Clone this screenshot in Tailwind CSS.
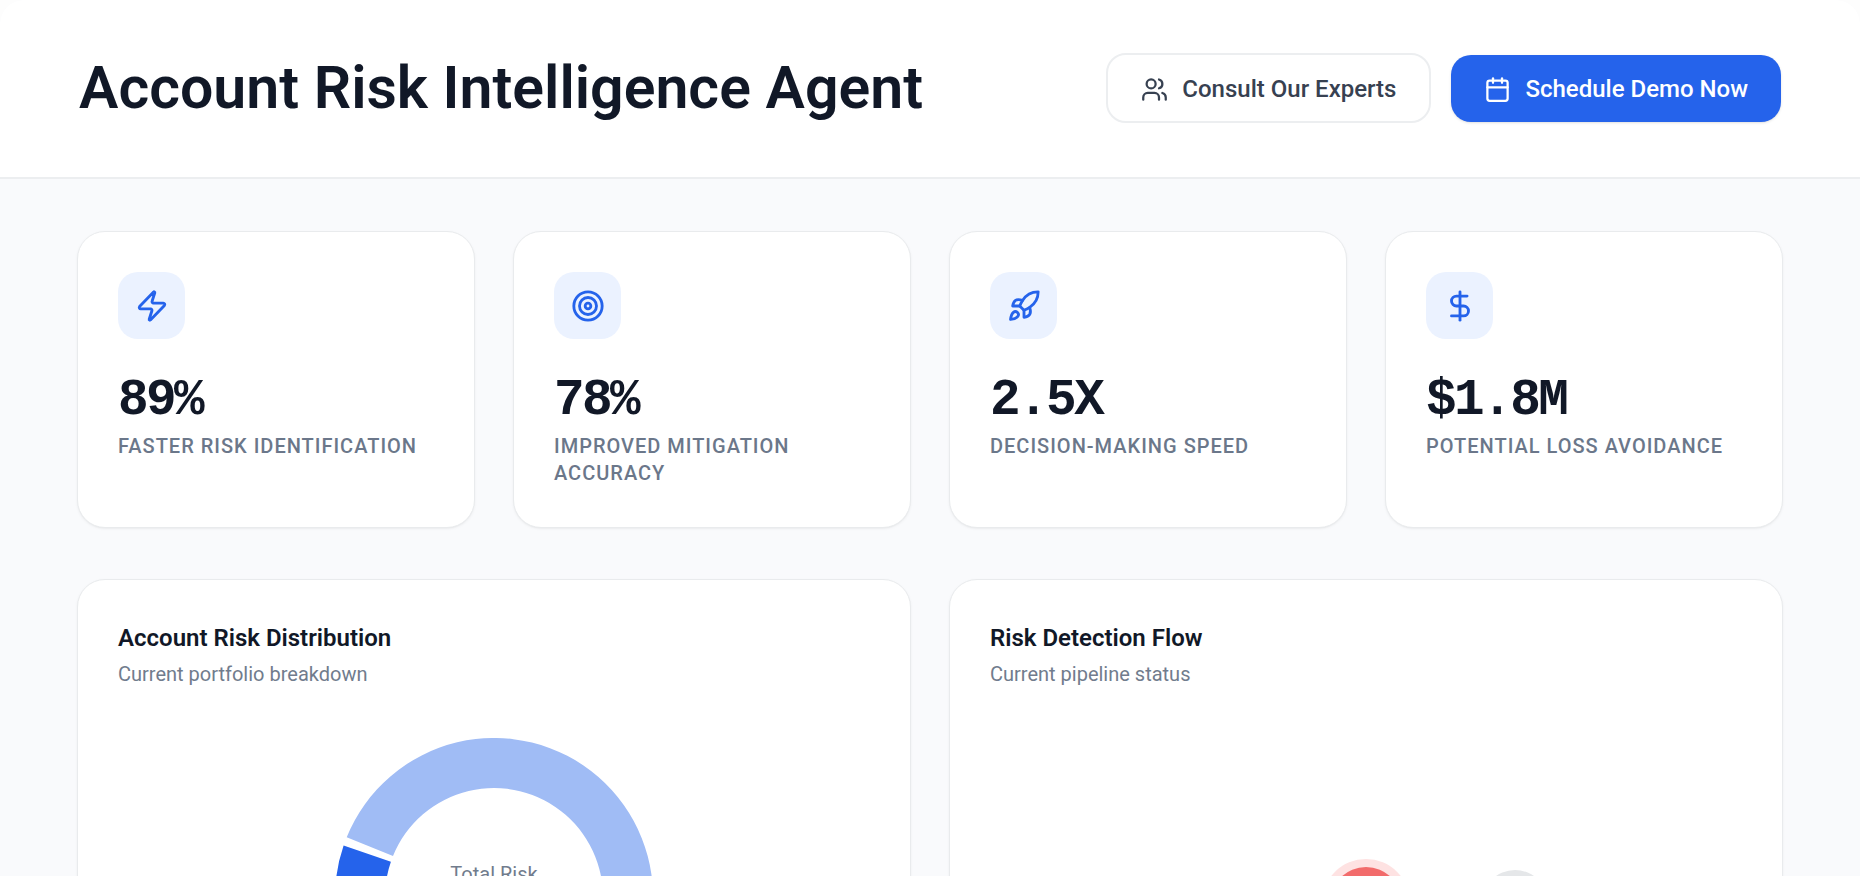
<!DOCTYPE html>
<html lang="en">
<head>
  <meta charset="UTF-8">
  <title>Account Risk Intelligence Agent</title>
  <meta name="viewport" content="width=device-width, initial-scale=1.0">
  <script src="https://cdn.jsdelivr.net/npm/@tailwindcss/browser@4"></script>
</head>
<body class="h-screen overflow-hidden bg-[#fdfdfd] font-['Roboto','Liberation_Sans',sans-serif] text-[#111827]">
  <div id="page" class="min-h-full rounded-t-3xl bg-[#f9fafc] overflow-hidden">
    <header class="flex items-center justify-between gap-8 bg-white border-b-2 border-[#eceef0] px-[79px] pt-[53px] pb-[54px]">
      <h1 class="text-[59px] leading-[70px] font-semibold whitespace-nowrap">Account Risk Intelligence Agent</h1>
      <div class="flex items-center gap-5 text-2xl font-medium whitespace-nowrap">
        <button type="button" class="flex items-center gap-3.5 h-[70px] px-[33px] pt-0.5 rounded-[20px] border-2 border-[#eceef0] bg-white text-[#374151]">
          <svg class="size-[27px]" viewBox="0 0 24 24" fill="none" stroke="currentColor" stroke-width="2" stroke-linecap="round" stroke-linejoin="round" aria-hidden="true">
            <path d="M16 21v-2a4 4 0 0 0-4-4H6a4 4 0 0 0-4 4v2"/>
            <circle cx="9" cy="7" r="4"/>
            <path d="M22 21v-2a4 4 0 0 0-3-3.87"/>
            <path d="M16 3.13a4 4 0 0 1 0 7.75"/>
          </svg>
          Consult Our Experts
        </button>
        <button type="button" class="flex items-center gap-3.5 h-[67px] px-[33px] pt-0.5 rounded-[20px] bg-[#2563eb] text-white shadow-sm">
          <svg class="size-[27px]" viewBox="0 0 24 24" fill="none" stroke="currentColor" stroke-width="2" stroke-linecap="round" stroke-linejoin="round" aria-hidden="true">
            <path d="M8 2v4"/>
            <path d="M16 2v4"/>
            <rect width="18" height="18" x="3" y="4" rx="2"/>
            <path d="M3 10h18"/>
          </svg>
          Schedule Demo Now
        </button>
      </div>
    </header>

    <main class="px-[77px] py-[52px]">
      <!-- key figures -->
      <section class="grid grid-cols-4 gap-[38px]">
        <article class="rounded-[28px] border border-[#e9ebed] bg-white p-10 shadow-sm shadow-black/5">
          <div class="flex size-[67px] items-center justify-center rounded-[20px] bg-[#ebf2ff] text-[#2563eb]">
            <svg class="size-[34px]" viewBox="0 0 24 24" fill="none" stroke="currentColor" stroke-width="2" stroke-linecap="round" stroke-linejoin="round" aria-hidden="true">
              <path d="M4 14a1 1 0 0 1-.78-1.63l9.9-10.2a.5.5 0 0 1 .86.46l-1.92 6.02A1 1 0 0 0 13 10h7a1 1 0 0 1 .78 1.63l-9.9 10.2a.5.5 0 0 1-.86-.46l1.92-6.02A1 1 0 0 0 11 14z"/>
            </svg>
          </div>
          <p class="mt-9 text-[51px] leading-[51px] font-bold tracking-tighter font-['Liberation_Mono',monospace]">89%</p>
          <p class="mt-[7px] text-xl leading-[27px] font-medium uppercase tracking-wider text-[#6b778a]">Faster Risk Identification</p>
        </article>
        <article class="rounded-[28px] border border-[#e9ebed] bg-white p-10 shadow-sm shadow-black/5">
          <div class="flex size-[67px] items-center justify-center rounded-[20px] bg-[#ebf2ff] text-[#2563eb]">
            <svg class="size-[34px]" viewBox="0 0 24 24" fill="none" stroke="currentColor" stroke-width="2" stroke-linecap="round" stroke-linejoin="round" aria-hidden="true">
              <circle cx="12" cy="12" r="10"/>
              <circle cx="12" cy="12" r="6"/>
              <circle cx="12" cy="12" r="2"/>
            </svg>
          </div>
          <p class="mt-9 text-[51px] leading-[51px] font-bold tracking-tighter font-['Liberation_Mono',monospace]">78%</p>
          <p class="mt-[7px] text-xl leading-[27px] font-medium uppercase tracking-wider text-[#6b778a]">Improved Mitigation Accuracy</p>
        </article>
        <article class="rounded-[28px] border border-[#e9ebed] bg-white p-10 shadow-sm shadow-black/5">
          <div class="flex size-[67px] items-center justify-center rounded-[20px] bg-[#ebf2ff] text-[#2563eb]">
            <svg class="size-[34px]" viewBox="0 0 24 24" fill="none" stroke="currentColor" stroke-width="2" stroke-linecap="round" stroke-linejoin="round" aria-hidden="true">
              <path d="M4.5 16.5c-1.5 1.26-2 5-2 5s3.74-.5 5-2c.71-.84.7-2.13-.09-2.91a2.18 2.18 0 0 0-2.91-.09z"/>
              <path d="m12 15-3-3a22 22 0 0 1 2-3.95A12.88 12.88 0 0 1 22 2c0 2.72-.78 7.5-6 11a22.35 22.35 0 0 1-4 2z"/>
              <path d="M9 12H4s.55-3.03 2-4c1.62-1.08 5 0 5 0"/>
              <path d="M12 15v5s3.03-.55 4-2c1.08-1.62 0-5 0-5"/>
            </svg>
          </div>
          <p class="mt-9 text-[51px] leading-[51px] font-bold tracking-tighter font-['Liberation_Mono',monospace]">2.5X</p>
          <p class="mt-[7px] text-xl leading-[27px] font-medium uppercase tracking-wider text-[#6b778a]">Decision-Making Speed</p>
        </article>
        <article class="rounded-[28px] border border-[#e9ebed] bg-white p-10 shadow-sm shadow-black/5">
          <div class="flex size-[67px] items-center justify-center rounded-[20px] bg-[#ebf2ff] text-[#2563eb]">
            <svg class="size-[34px]" viewBox="0 0 24 24" fill="none" stroke="currentColor" stroke-width="2" stroke-linecap="round" stroke-linejoin="round" aria-hidden="true">
              <path d="M12 2v20"/>
              <path d="M17 5H9.5a3.5 3.5 0 0 0 0 7h5a3.5 3.5 0 0 1 0 7H6"/>
            </svg>
          </div>
          <p class="mt-9 text-[51px] leading-[51px] font-bold tracking-tighter font-['Liberation_Mono',monospace]">$1.8M</p>
          <p class="mt-[7px] text-xl leading-[27px] font-medium uppercase tracking-wider text-[#6b778a]">Potential Loss Avoidance</p>
        </article>
      </section>

      <!-- charts -->
      <section class="mt-[51px] grid grid-cols-2 gap-[38px]">
        <article class="rounded-[28px] border border-[#e9ebed] bg-white p-10 shadow-sm shadow-black/5">
          <h2 class="text-2xl leading-9 font-semibold">Account Risk Distribution</h2>
          <p class="text-xl leading-9 text-[#717c8d]">Current portfolio breakdown</p>
          <div class="relative mt-[46px] flex justify-center">
            <svg class="size-[318px]" viewBox="-159 -159 318 318" aria-hidden="true">
              <path fill="#a0bcf5" d="M-147.3-59.8A159 159 0 1 1 79.5 137.7L54.5 94.4A109 109 0 1 0-101-41Z"/>
              <path fill="#2563eb" d="M-150.4-51.5A159 159 0 0 0 71.6 142L49.1 97.3A109 109 0 0 1-103.1-35.3Z"/>
            </svg>
            <p class="absolute inset-x-0 top-[122px] text-center text-xl leading-7 text-[#717c8d]">Total Risk</p>
          </div>
        </article>
        <article class="rounded-[28px] border border-[#e9ebed] bg-white p-10 shadow-sm shadow-black/5">
          <h2 class="text-2xl leading-9 font-semibold">Risk Detection Flow</h2>
          <p class="text-xl leading-9 text-[#717c8d]">Current pipeline status</p>
          <div class="mt-[167px] flex justify-center">
            <svg class="h-[88px] w-[388px]" viewBox="-194 -44 388 88" aria-hidden="true">
              <circle r="44" fill="#fee2e2"/>
              <circle r="36" fill="#f26b6b"/>
              <circle cx="149" r="33" fill="#e5e7e9"/>
            </svg>
          </div>
        </article>
      </section>
    </main>
  </div>
</body>
</html>
